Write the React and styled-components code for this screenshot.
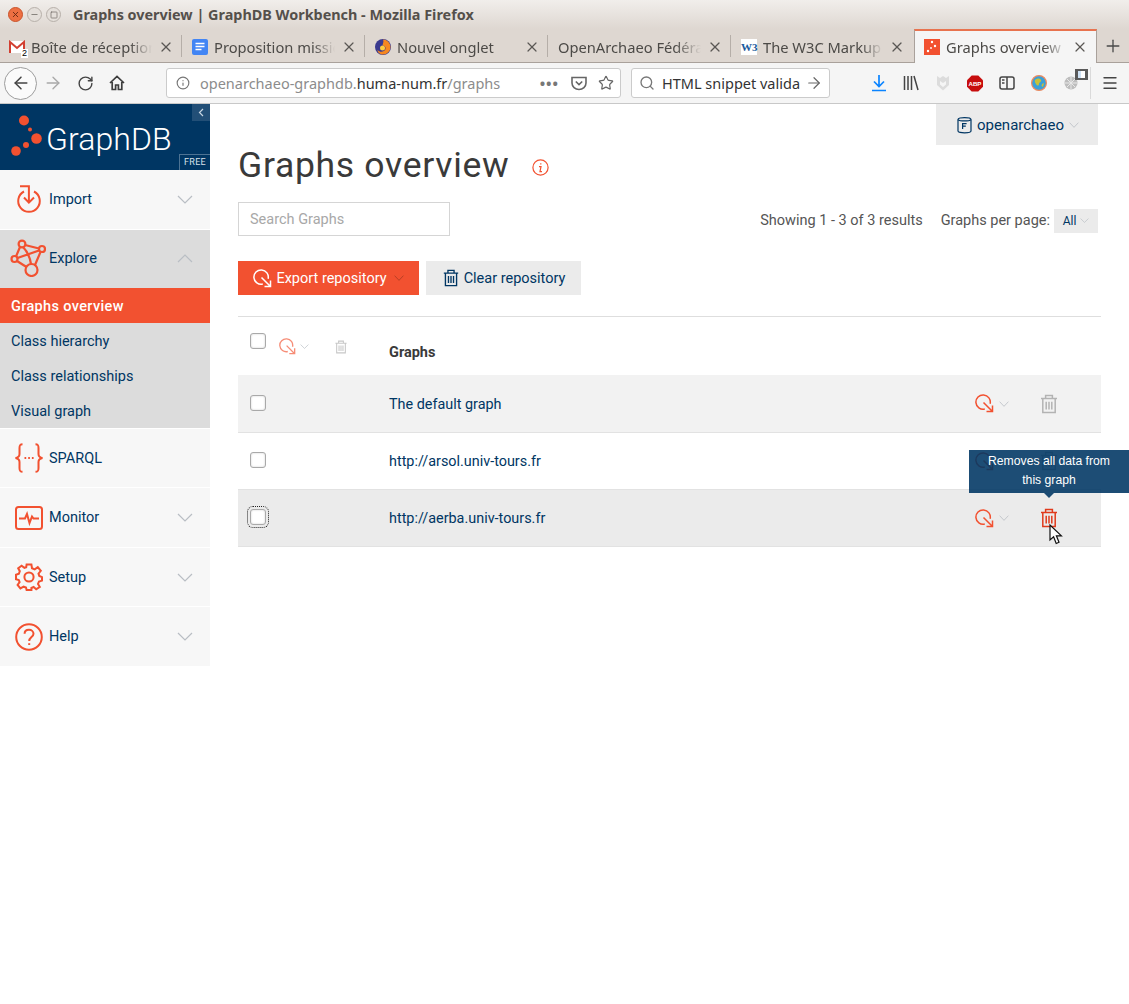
import React from 'react';
import styled, { createGlobalStyle } from 'styled-components';
import { ArrowLeft, ArrowRight, RotateCw, Search, X, Plus, Menu, Info, Minus, Square, Star } from 'lucide-react';

const ORANGE = '#f25130';
const NAVY = '#003663';

const GlobalStyle = createGlobalStyle`
  html, body { margin: 0; padding: 0; background: #fff; }
  * { box-sizing: border-box; }
  body { font-family: "Roboto", "Liberation Sans", sans-serif; }
`;

const ExportIcon = ({ size = 19, color = ORANGE, opacity = 1 }) => (
  <svg width={size} height={size} viewBox="0 0 19 19" fill="none" stroke={color} strokeWidth="1.5" opacity={opacity}>
    <path d="M9.8 15.1A7.2 7.2 0 1 1 15.1 9.8" />
    <path d="M8.5 8.5L17.5 17.5M17.5 11.5V17.5H11.5" />
  </svg>
);

const TrashIcon = ({ size = 20, color = NAVY, opacity = 1 }) => (
  <svg width={size} height={size} viewBox="0 0 20 20" fill="none" stroke={color} strokeWidth="1.5" opacity={opacity}>
    <path d="M2 4.6H18M6.6 4.4V1.6H13.4V4.4M3.8 4.8V18.4H16.2V4.8M7.2 7.8V15.6M10 7.8V15.6M12.8 7.8V15.6" />
  </svg>
);

const Chevron = ({ width = 16, height = 9, up = false, color = '#b9bec4' }) => (
  <svg width={width} height={height} viewBox="0 0 16 9" fill="none" stroke={color} strokeWidth="1.2" preserveAspectRatio="none">
    <path d={up ? 'M1 8L8 1L15 8' : 'M1 1L8 8L15 1'} />
  </svg>
);

const ImportIcon = () => (
  <svg width="26" height="30" viewBox="0 0 26 30" fill="none" stroke={ORANGE} strokeWidth="2">
    <path d="M8 6.5A10.8 10.8 0 1 0 18 6.5" />
    <path d="M4 1.2H12.9V17M8 12.5L12.9 17.6L18 12.5" />
  </svg>
);

const ExploreIcon = () => (
  <svg width="36" height="38" viewBox="0 0 36 38" fill="none" stroke={ORANGE} strokeWidth="2.2">
    <circle cx="12" cy="5" r="3.4" />
    <circle cx="32" cy="10" r="3" />
    <circle cx="21.5" cy="31" r="6" />
    <circle cx="4.5" cy="20" r="3" />
    <path d="M10 8L6 17.5M15 6L29 9.5M7 22L16.5 28M30.5 13L25 26M13 8C18 13 20 19 21 25M7.5 19L29 11.5" />
  </svg>
);

const BracesIcon = () => (
  <svg width="30" height="30" viewBox="0 0 30 30" fill="none" stroke={ORANGE} strokeWidth="2">
    <path d="M8.5 1.2C5.5 1.2 5.5 3 5.5 5V11C5.5 13 4 14.6 1.5 15C4 15.4 5.5 17 5.5 19V25C5.5 27 5.5 28.8 8.5 28.8" />
    <path d="M21.5 1.2C24.5 1.2 24.5 3 24.5 5V11C24.5 13 26 14.6 28.5 15C26 15.4 24.5 17 24.5 19V25C24.5 27 24.5 28.8 21.5 28.8" />
    <path d="M10.5 15H12.2M14.2 15H15.9M17.9 15H19.6" strokeWidth="2.1" />
  </svg>
);

const MonitorIcon = () => (
  <svg width="28" height="24" viewBox="0 0 28 24" fill="none" stroke={ORANGE} strokeWidth="2">
    <rect x="1" y="1" width="26" height="22" rx="2.5" />
    <path d="M4 12.5H10L12 8L14.5 17L17 10.5L18.5 12.5H24" />
  </svg>
);

const GearIcon = () => (
  <svg width="28" height="28" viewBox="0 0 28 28" fill="none" stroke={ORANGE} strokeWidth="2">
    <circle cx="14" cy="14" r="4.6" />
    <path d="M11.6 1.5H16.4L17 5.2L19.7 6.4L22.8 4.2L25.8 7.8L23.5 10.6L24.3 13L27 14.2V17.6L24 18.5L23 21L24.8 24L21.2 26.2L18.6 24L16.4 25V27H11.6L11 24.6L8.6 23.7L5.4 25.4L2.6 22L4.6 19.2L3.8 17L1 16.2V11.8L3.9 10.8L4.8 8.2L3.2 5.2L6.6 2.8L9.4 4.8L11.2 4.2Z" />
  </svg>
);

const HelpIcon = () => (
  <svg width="28" height="28" viewBox="0 0 28 28" fill="none" stroke={ORANGE} strokeWidth="2">
    <circle cx="14" cy="14" r="12.8" />
    <path d="M9.6 10.8C9.6 8.2 11.6 6.8 14 6.8C16.5 6.8 18.5 8.4 18.5 10.8C18.5 14 14.2 14.2 14.2 18" />
    <path d="M14.2 20.2V22" />
  </svg>
);

const RepoIcon = () => (
  <svg width="15" height="18" viewBox="0 0 15 18" fill="none" stroke={NAVY} strokeWidth="1.2">
    <path d="M1 3.4C1 0.9 14 0.9 14 3.4V15C14 17.4 1 17.4 1 15Z" />
    <path d="M1 3.6C3 5.4 12 5.4 14 3.6" />
    <path d="M5.6 13V7.6H9.6M5.6 10.2H8.8" />
  </svg>
);

const GraphLogo = () => (
  <svg width="33" height="44" viewBox="0 0 33 44">
    <g fill={ORANGE}>
      <circle cx="14" cy="5.5" r="5" />
      <circle cx="20" cy="14.5" r="2" />
      <circle cx="26.5" cy="23.5" r="5.3" />
      <circle cx="16" cy="30" r="3" />
      <circle cx="6" cy="36" r="4.8" />
    </g>
  </svg>
);

const GmailIcon = () => (
  <svg width="16" height="14" viewBox="0 0 16 14">
    <rect x="0.5" y="1" width="15" height="12" fill="#fff" />
    <path d="M1 13V2L8 8L15 2V13" fill="none" stroke="#d23f31" strokeWidth="2" />
  </svg>
);

const DocsIcon = () => (
  <svg width="16" height="16" viewBox="0 0 16 16">
    <rect width="16" height="16" rx="2" fill="#4285f4" />
    <path d="M3.5 4.5H12.5M3.5 7.5H12.5M3.5 10.5H9.5" stroke="#fff" strokeWidth="1.5" />
  </svg>
);

const FirefoxIcon = () => (
  <svg width="16" height="16" viewBox="0 0 16 16">
    <circle cx="8" cy="8" r="8" fill="#3b3a8f" />
    <path d="M8 0.5A7.5 7.5 0 0 1 15.5 8A7.5 7.5 0 0 1 8 15.5C4.5 15.5 2.5 13 2.5 11C5 14 9.5 13 10.5 10C11 8 9.5 6.5 7.5 6.5C8 4 9 2.5 8 0.5Z" fill="#f6871f" />
    <circle cx="7.5" cy="9" r="2.5" fill="#ffcb3d" />
  </svg>
);

const FavGraph = () => (
  <svg width="16" height="16" viewBox="0 0 16 16">
    <rect width="16" height="16" fill={ORANGE} />
    <g fill="#fff">
      <circle cx="8" cy="3" r="1.2" />
      <circle cx="11" cy="7" r="1.2" />
      <circle cx="7" cy="9" r="0.9" />
      <circle cx="4" cy="12" r="1.2" />
    </g>
  </svg>
);

const HomeIcon = () => (
  <svg width="16" height="16" viewBox="0 0 16 16" fill="none" stroke="#3d3d3d" strokeWidth="1.7">
    <path d="M1 8L8 1.5L15 8M3.2 7V14.5H6.6V10H9.4V14.5H12.8V7" />
  </svg>
);

const PocketIcon = () => (
  <svg width="16" height="15" viewBox="0 0 16 15" fill="none" stroke="#666" strokeWidth="1.6">
    <path d="M1 1.5H15V7A7 6.5 0 0 1 1 7Z" />
    <path d="M4.8 5.5L8 8.6L11.2 5.5" />
  </svg>
);

const LibraryIcon = () => (
  <svg width="16" height="16" viewBox="0 0 16 16" fill="none" stroke="#444" strokeWidth="1.5">
    <path d="M1.5 1V15M5 1V15M8.5 1V15M11 1L15 15" />
  </svg>
);

const ShieldIcon = () => (
  <svg width="14" height="16" viewBox="0 0 14 16" fill="#dcdcdc">
    <path d="M1 1L4 3L7 1L10 3L13 1V10L7 15.5L1 10ZM4 6V9.5L7 12L10 9.5V6L7 8Z" />
  </svg>
);

const AbpIcon = () => (
  <svg width="17" height="17" viewBox="0 0 17 17">
    <path d="M5 0H12L17 5V12L12 17H5L0 12V5Z" fill="#c70d0d" />
    <text x="8.5" y="11" textAnchor="middle" fontFamily="Liberation Sans" fontSize="6.5" fontWeight="700" fill="#fff">ABP</text>
  </svg>
);

const SidebarIcon = () => (
  <svg width="16" height="14" viewBox="0 0 16 14" fill="none" stroke="#444" strokeWidth="1.5">
    <rect x="1" y="1" width="14" height="12" rx="2" />
    <path d="M8 1V13M3 4H5.5M3 7H5.5" />
  </svg>
);

const GlobeIcon = () => (
  <svg width="16" height="16" viewBox="0 0 16 16">
    <circle cx="8" cy="8" r="7.4" fill="#3aa0d8" stroke="#f08a5d" strokeWidth="1.2" />
    <path d="M4 5C6 3 9 3 10 5C11 7 8 7 8 9C8 11 6 11 5 9C4 8 3.5 6 4 5ZM11 9L13 8L12 12L10.5 11Z" fill="#c7c13a" />
  </svg>
);

const ExtIcon = () => (
  <svg width="14" height="14" viewBox="0 0 14 14">
    <circle cx="7" cy="7" r="6.5" fill="#bdbdbd" />
    <path d="M7 1V13M1 7H13M3 3L11 11M11 3L3 11" stroke="#e8e8e8" strokeWidth="1" />
  </svg>
);

const CursorIcon = () => (
  <svg width="14" height="21" viewBox="0 0 14 21">
    <path d="M1 1V16L4.6 12.8L7.2 19.5L10 18.3L7.4 11.8H12.4Z" fill="#fff" stroke="#111" strokeWidth="1.2" />
  </svg>
);

const Page = styled.div`
  width: 1129px;
  min-height: 1004px;
  background: #fff;
`;

const Chrome = styled.header`
  height: 104px;
  font-family: "Noto Sans", "Open Sans", sans-serif;
  border-bottom: 1px solid #c8c8c8;
`;

const TitleBar = styled.div`
  height: 29px;
  display: flex;
  align-items: center;
  padding-left: 8px;
  background: linear-gradient(#f1eeeb, #ded7d1);
`;

const WindowButton = styled.span`
  width: 15px;
  height: 15px;
  margin-right: 4px;
  border-radius: 50%;
  display: flex;
  align-items: center;
  justify-content: center;
  color: ${p => (p.$close ? '#6d2a12' : '#6a655f')};
  border: 1px solid ${p => (p.$close ? '#c9532b' : '#b7b0aa')};
  background: ${p => (p.$close ? '#ee6f42' : '#e4dfda')};
`;

const WindowTitle = styled.div`
  margin-left: 8px;
  font-size: 14.4px;
  font-weight: 700;
  color: #55504b;
  white-space: nowrap;
`;

const TabStrip = styled.div`
  height: 34px;
  display: flex;
  background: #ded7d1;
  border-bottom: 1px solid #a9a19b;
`;

const Tab = styled.div`
  position: relative;
  width: ${p => p.$width || 183}px;
  height: ${p => (p.$active ? 34 : 33)}px;
  display: flex;
  align-items: center;
  padding: 0 9px;
  gap: 6px;
  color: #4c4a47;
  font-size: 14.7px;
  background: ${p => (p.$active ? '#f5f5f5' : 'transparent')};
  border-top: ${p => (p.$active ? `2px solid #e8734f` : '2px solid transparent')};
  border-right: 1px solid ${p => (p.$active ? '#a9a19b' : 'transparent')};
  border-left: ${p => (p.$active ? '1px solid #a9a19b' : 'none')};
  &::after {
    content: ${p => (p.$sep ? '""' : 'none')};
    position: absolute;
    right: 0;
    top: 4px;
    bottom: 5px;
    width: 1px;
    background: #b5aea8;
  }
`;

const TabIcon = styled.span`
  position: relative;
  flex: none;
  width: 16px;
  height: 16px;
  display: flex;
  align-items: center;
  justify-content: center;
`;

const GmailBadge = styled.span`
  position: absolute;
  right: -3px;
  bottom: -3px;
  background: #fff;
  color: #000;
  font: 9px/9px "Liberation Sans", sans-serif;
  padding: 0 1px;
`;

const W3Mark = styled.span`
  width: 16px;
  height: 16px;
  background: #fff;
  color: #1a5a9c;
  font: 700 11px/16px "Liberation Serif", serif;
  text-align: center;
`;

const TabLabel = styled.span`
  flex: 1;
  min-width: 0;
  white-space: nowrap;
  overflow: hidden;
  -webkit-mask-image: linear-gradient(to right, #000 82%, transparent);
  mask-image: linear-gradient(to right, #000 82%, transparent);
`;

const TabClose = styled.span`
  flex: none;
  display: flex;
  margin-right: -1px;
  color: #5a5754;
`;

const NewTab = styled.div`
  flex: 1;
  display: flex;
  align-items: center;
  justify-content: center;
  color: #4a4a4a;
`;

const Toolbar = styled.div`
  height: 40px;
  display: flex;
  align-items: center;
  padding-left: 4px;
  background: #f5f5f5;
`;

const BackButton = styled.span`
  flex: none;
  width: 33px;
  height: 33px;
  border-radius: 50%;
  border: 1px solid #9d9d9d;
  background: #fbfbfb;
  display: flex;
  align-items: center;
  justify-content: center;
  color: #444;
`;

const NavButton = styled.span`
  flex: none;
  width: ${p => p.$width || 32}px;
  display: flex;
  align-items: center;
  justify-content: center;
  color: ${p => p.$color || '#444'};
`;

const UrlBar = styled.div`
  width: ${p => p.$width}px;
  margin-left: ${p => p.$left}px;
  height: 30px;
  flex: none;
  display: flex;
  align-items: center;
  background: #fff;
  border: 1px solid #cbcbcb;
  border-radius: 3px;
  font-size: 14.5px;
  color: #333;
  white-space: nowrap;
  overflow: hidden;
`;

const UrlInfo = styled.span`
  display: flex;
  margin: 0 ${p => p.$right || 10}px 0 ${p => p.$left || 9}px;
  color: #777;
`;

const Dim = styled.span`
  color: #8c8c8c;
`;

const UrlText = styled.span`
  flex: 1;
`;

const PageDots = styled.span`
  color: #777;
  font-weight: 700;
  letter-spacing: 1px;
  margin-right: 12px;
`;

const UrlAction = styled.span`
  display: flex;
  margin-right: ${p => p.$right || 6}px;
  color: #666;
`;

const SearchText = styled.span`
  width: 138px;
  overflow: hidden;
  margin-right: 5px;
`;

const ToolIcons = styled.div`
  flex: none;
  margin-left: 41px;
  display: flex;
  align-items: center;
  gap: 16px;
`;

const ToolSlot = styled.span`
  position: relative;
  width: 16px;
  height: 20px;
  display: flex;
  align-items: center;
  justify-content: center;
  color: #0a84ff;
`;

const ReaderBadge = styled.span`
  position: absolute;
  top: -4px;
  right: -9px;
  width: 13px;
  height: 11px;
  background: #5a5a5a;
  &::after {
    content: "";
    position: absolute;
    left: 3px;
    right: 3px;
    top: 2px;
    bottom: 2px;
    background: #fff;
    border-left: 3px solid #cfe2f5;
  }
`;

const ToolDivider = styled.span`
  flex: none;
  width: 1px;
  height: 32px;
  margin-left: 11px;
  background: #dadada;
`;

const Body = styled.div`
  display: flex;
  align-items: flex-start;
`;

const Sidebar = styled.nav`
  flex: none;
  width: 210px;
`;

const Brand = styled.div`
  position: relative;
  height: 66px;
  background: ${NAVY};
  display: flex;
  align-items: center;
  padding-left: 10px;
  color: #fff;
`;

const BrandName = styled.span`
  margin-left: 3px;
  padding-top: 3px;
  font: 300 32px/44px "Roboto", "Lato", sans-serif;
  letter-spacing: 0.1px;
`;

const CollapseButton = styled.span`
  position: absolute;
  top: 0;
  right: 0;
  width: 18px;
  height: 17px;
  background: #224f77;
  color: #c8d6e2;
  display: flex;
  align-items: center;
  justify-content: center;
`;

const FreeBadge = styled.span`
  position: absolute;
  right: 0;
  bottom: 0;
  width: 31px;
  height: 16px;
  border: 1px solid #4d7393;
  border-bottom: none;
  border-right: none;
  font: 9px/15px "Roboto", sans-serif;
  letter-spacing: 0.3px;
  text-align: center;
  color: #d8e2ea;
`;

const NavItem = styled.div`
  height: ${p => p.$height || 59}px;
  display: flex;
  align-items: center;
  padding-bottom: ${p => (p.$open ? 2 : 0)}px;
  background: ${p => (p.$open ? '#dcdcdc' : '#f7f7f7')};
  border-bottom: ${p => (p.$plain ? 'none' : '1px solid #fff')};
  color: ${NAVY};
  font-size: 14.5px;
`;

const NavIcon = styled.span`
  flex: none;
  width: 49px;
  padding-left: ${p => (p.$wide ? 6 : 9)}px;
  display: flex;
  align-items: center;
  justify-content: center;
`;

const NavLabel = styled.span`
  flex: 1;
`;

const NavChevron = styled.span`
  display: flex;
  margin-right: 17px;
`;

const SubMenu = styled.div`
  background: #dcdcdc;
  border-bottom: 1px solid #fff;
`;

const SubItem = styled.div`
  height: 35px;
  padding: 1px 0 0 11px;
  display: flex;
  align-items: center;
  font-size: 14.5px;
  color: ${p => (p.$active ? '#fff' : NAVY)};
  font-weight: ${p => (p.$active ? 500 : 400)};
  letter-spacing: ${p => (p.$active ? '0.35px' : '0')};
  background: ${p => (p.$active ? ORANGE : 'transparent')};
`;

const Main = styled.main`
  flex: 1;
  min-width: 0;
  padding: 0 28px;
`;

const RepoRow = styled.div`
  display: flex;
  justify-content: flex-end;
  padding-right: 3px;
`;

const RepoButton = styled.div`
  width: 162px;
  height: 41px;
  padding: 1px 0 0 2px;
  display: flex;
  align-items: center;
  justify-content: center;
  gap: 5px;
  background: #ebebeb;
  color: ${NAVY};
  font-size: 15px;
`;

const TitleRow = styled.div`
  height: 40px;
  display: flex;
  align-items: center;
  gap: 23px;
`;

const Title = styled.h1`
  margin: 0;
  font: 400 35.5px/40px "Roboto", sans-serif;
  letter-spacing: 0.7px;
  color: #3a3a3a;
`;

const InfoMark = styled.svg`
  margin-top: 5px;
`;

const FilterRow = styled.div`
  margin-top: 17px;
  display: flex;
  align-items: center;
  justify-content: space-between;
  padding-right: 3px;
`;

const SearchInput = styled.input`
  width: 212px;
  height: 34px;
  padding: 0 11px;
  border: 1px solid #d5d5d5;
  font: 14.5px "Roboto", sans-serif;
  outline: none;
  &::placeholder { color: #a8a8a8; opacity: 1; }
`;

const Results = styled.div`
  display: flex;
  align-items: center;
  padding-top: 3px;
  font-size: 14.5px;
  color: #555;
`;

const PerPage = styled.span`
  margin-left: 18px;
  margin-right: 4px;
`;

const PageSelect = styled.span`
  width: 44px;
  height: 24px;
  display: flex;
  align-items: center;
  justify-content: center;
  gap: 4px;
  background: #ebebeb;
  color: ${NAVY};
  font-size: 12px;
`;

const ActionRow = styled.div`
  margin-top: 25px;
  display: flex;
  gap: 7px;
`;

const ActionButton = styled.button`
  height: 34px;
  padding: 0;
  width: ${p => p.$width}px;
  display: flex;
  align-items: center;
  justify-content: center;
  gap: 4px;
  border: none;
  background: ${p => (p.$primary ? ORANGE : '#ebebeb')};
  color: ${p => (p.$primary ? '#fff' : NAVY)};
  font: 14.5px "Roboto", sans-serif;
`;

const ButtonChevron = styled.span`
  display: flex;
  margin-left: 3px;
`;

const Table = styled.section`
  margin-top: 21px;
  border-top: 1px solid #dedede;
`;

const Row = styled.div`
  height: ${p => p.$height}px;
  display: grid;
  grid-template-columns: 151px 1fr 126px;
  align-items: center;
  background: ${p => p.$bg || '#fff'};
  border-bottom: 1px solid #e2e2e2;
`;

const HeaderRow = styled(Row)`
  align-items: start;
  border-bottom: none;
`;

const CheckCell = styled.div`
  padding: 0 0 2px 12px;
  display: flex;
  align-items: center;
`;

const HeaderTools = styled.div`
  display: flex;
  align-items: flex-start;
  padding: 16px 0 0 12px;
`;

const Check = styled.span`
  flex: none;
  width: 16px;
  height: 16px;
  border: 1px solid #a9a9a9;
  border-radius: 3px;
  background: #fff;
  box-shadow: inset 0 0 2px #c8c8c8;
  outline: ${p => (p.$focus ? '1px dotted #222' : 'none')};
  outline-offset: 2px;
`;

const HeaderIcons = styled.span`
  margin-left: 13px;
  display: flex;
  align-items: center;
  padding-top: 5px;
`;

const SmallChevron = styled.span`
  display: flex;
  margin-left: ${p => p.$left || 4}px;
`;

const HeaderTrash = styled.span`
  display: flex;
  margin-left: 25px;
`;

const HeaderTitle = styled.div`
  padding-top: 27px;
  font-size: 14.5px;
  font-weight: 700;
  color: #3a3a3a;
`;

const GraphName = styled.div`
  padding-top: 1px;
  font-size: 14.4px;
  color: ${NAVY};
`;

const RowActions = styled.div`
  display: flex;
  align-items: center;
`;

const TrashCell = styled.span`
  position: relative;
  display: flex;
  margin-left: 30px;
`;

const Tooltip = styled.div`
  position: absolute;
  left: 50%;
  bottom: 35px;
  width: 160px;
  margin-left: -80px;
  padding: 2px 12px 3px;
  background: rgba(0, 54, 99, 0.886);
  color: #fff;
  font: 12.2px/19px "Liberation Sans", sans-serif;
  text-align: center;
  &::after {
    content: "";
    position: absolute;
    left: 50%;
    bottom: -5px;
    margin-left: -5px;
    border: 5px solid transparent;
    border-bottom: none;
    border-top-color: rgba(0, 54, 99, 0.886);
  }
`;

const Pointer = styled.span`
  position: absolute;
  left: 10px;
  top: 16px;
  display: flex;
`;

const navGroups = [
  { label: 'SPARQL', icon: <BracesIcon />, height: 59 },
  { label: 'Monitor', icon: <MonitorIcon />, chevron: true, height: 60 },
  { label: 'Setup', icon: <GearIcon />, chevron: true, height: 59 },
];

const subItems = ['Graphs overview', 'Class hierarchy', 'Class relationships', 'Visual graph'];

const tabs = [
  { label: 'Boîte de réception', icon: <><GmailIcon /><GmailBadge>2</GmailBadge></>, sep: true },
  { label: 'Proposition mission', icon: <DocsIcon />, sep: true },
  { label: 'Nouvel onglet', icon: <FirefoxIcon />, sep: true },
  { label: 'OpenArchaeo Fédération', sep: true },
  { label: 'The W3C Markup Validator', icon: <W3Mark>W3</W3Mark>, width: 182 },
  { label: 'Graphs overview | GraphDB', icon: <FavGraph />, active: true },
];

const RowTools = ({ trashColor, trashOpacity, children }) => (
  <RowActions>
    <ExportIcon />
    <SmallChevron $left={5}><Chevron width={10} height={6} /></SmallChevron>
    <TrashCell>
      <TrashIcon color={trashColor} opacity={trashOpacity} />
      {children}
    </TrashCell>
  </RowActions>
);

export default function App() {
  return (
    <Page>
      <GlobalStyle />
      <Chrome>
        <TitleBar>
          <WindowButton $close><X size={9} strokeWidth={2.5} /></WindowButton>
          <WindowButton><Minus size={9} /></WindowButton>
          <WindowButton><Square size={8} /></WindowButton>
          <WindowTitle>Graphs overview | GraphDB Workbench - Mozilla Firefox</WindowTitle>
        </TitleBar>
        <TabStrip>
          {tabs.map(tab => (
            <Tab key={tab.label} $active={tab.active} $sep={tab.sep} $width={tab.width}>
              {tab.icon && <TabIcon>{tab.icon}</TabIcon>}
              <TabLabel>{tab.label}</TabLabel>
              <TabClose><X size={16} strokeWidth={1.8} /></TabClose>
            </Tab>
          ))}
          <NewTab><Plus size={20} strokeWidth={1.6} /></NewTab>
        </TabStrip>
        <Toolbar>
          <BackButton><ArrowLeft size={20} strokeWidth={1.8} /></BackButton>
          <NavButton $color="#a8a8a8"><ArrowRight size={20} strokeWidth={1.6} /></NavButton>
          <NavButton><RotateCw size={17} strokeWidth={2} /></NavButton>
          <NavButton><HomeIcon /></NavButton>
          <UrlBar $width={455} $left={33}>
            <UrlInfo><Info size={14} /></UrlInfo>
            <UrlText><Dim>openarchaeo-graphdb.</Dim>huma-num.fr<Dim>/graphs</Dim></UrlText>
            <PageDots>•••</PageDots>
            <UrlAction $right={11}><PocketIcon /></UrlAction>
            <UrlAction><Star size={16} strokeWidth={1.8} /></UrlAction>
          </UrlBar>
          <UrlBar $width={199} $left={10}>
            <UrlInfo $left={7} $right={7}><Search size={16} /></UrlInfo>
            <SearchText>HTML snippet validation</SearchText>
            <UrlAction $right={0}><ArrowRight size={18} strokeWidth={1.6} /></UrlAction>
          </UrlBar>
          <ToolIcons>
            <ToolSlot>
              <svg width="16" height="18" viewBox="0 0 16 18" fill="none" stroke="currentColor" strokeWidth="1.7">
                <path d="M8 1V12M3 7.5L8 12.5L13 7.5M1 16.5H15" />
              </svg>
            </ToolSlot>
            <ToolSlot><LibraryIcon /></ToolSlot>
            <ToolSlot><ShieldIcon /></ToolSlot>
            <ToolSlot><AbpIcon /></ToolSlot>
            <ToolSlot><SidebarIcon /></ToolSlot>
            <ToolSlot><GlobeIcon /></ToolSlot>
            <ToolSlot><ExtIcon /><ReaderBadge /></ToolSlot>
          </ToolIcons>
          <ToolDivider />
          <NavButton $width={38}><Menu size={18} strokeWidth={1.8} /></NavButton>
        </Toolbar>
      </Chrome>
      <Body>
        <Sidebar>
          <Brand>
            <GraphLogo />
            <BrandName>GraphDB</BrandName>
            <CollapseButton>
              <svg width="6" height="9" viewBox="0 0 6 9" fill="none" stroke="currentColor" strokeWidth="1.2"><path d="M5 1L1.5 4.5L5 8" /></svg>
            </CollapseButton>
            <FreeBadge>FREE</FreeBadge>
          </Brand>
          <NavItem $height={60}>
            <NavIcon><ImportIcon /></NavIcon>
            <NavLabel>Import</NavLabel>
            <NavChevron><Chevron /></NavChevron>
          </NavItem>
          <NavItem $open $plain $height={58}>
            <NavIcon $wide><ExploreIcon /></NavIcon>
            <NavLabel>Explore</NavLabel>
            <NavChevron><Chevron up /></NavChevron>
          </NavItem>
          <SubMenu>
            {subItems.map((item, i) => <SubItem key={item} $active={i === 0}>{item}</SubItem>)}
          </SubMenu>
          {navGroups.map(item => (
            <NavItem key={item.label} $height={item.height}>
              <NavIcon>{item.icon}</NavIcon>
              <NavLabel>{item.label}</NavLabel>
              {item.chevron && <NavChevron><Chevron /></NavChevron>}
            </NavItem>
          ))}
          <NavItem $plain>
            <NavIcon><HelpIcon /></NavIcon>
            <NavLabel>Help</NavLabel>
            <NavChevron><Chevron /></NavChevron>
          </NavItem>
        </Sidebar>
        <Main>
          <RepoRow>
            <RepoButton>
              <RepoIcon />
              openarchaeo
              <Chevron width={10} height={6} />
            </RepoButton>
          </RepoRow>
          <TitleRow>
            <Title>Graphs overview</Title>
            <InfoMark width="17" height="17" viewBox="0 0 17 17" fill="none" stroke={ORANGE} strokeWidth="1.2">
              <circle cx="8.5" cy="8.5" r="7.6" />
              <path d="M8.8 4.2V5.4M7 7.6H9L8 12.6H10" />
            </InfoMark>
          </TitleRow>
          <FilterRow>
            <SearchInput placeholder="Search Graphs" />
            <Results>
              Showing 1 - 3 of 3 results
              <PerPage>Graphs per page:</PerPage>
              <PageSelect>All <Chevron width={9} height={5} /></PageSelect>
            </Results>
          </FilterRow>
          <ActionRow>
            <ActionButton $primary $width={181}>
              <ExportIcon color="#fff" />
              Export repository
              <ButtonChevron><Chevron width={10} height={6} color="#a83a22" /></ButtonChevron>
            </ActionButton>
            <ActionButton $width={155}>
              <TrashIcon size={18} />
              Clear repository
            </ActionButton>
          </ActionRow>
          <Table>
            <HeaderRow $height={58}>
              <HeaderTools>
                <Check />
                <HeaderIcons>
                  <ExportIcon size={17} opacity={0.65} />
                  <SmallChevron><Chevron width={9} height={5} /></SmallChevron>
                  <HeaderTrash><TrashIcon size={14} color="#9a9a9a" opacity={0.55} /></HeaderTrash>
                </HeaderIcons>
              </HeaderTools>
              <HeaderTitle>Graphs</HeaderTitle>
            </HeaderRow>
            <Row $height={58} $bg="#f2f2f2">
              <CheckCell><Check /></CheckCell>
              <GraphName>The default graph</GraphName>
              <RowTools trashColor="#8a8a8a" trashOpacity={0.6} />
            </Row>
            <Row $height={57}>
              <CheckCell><Check /></CheckCell>
              <GraphName>http://arsol.univ-tours.fr</GraphName>
              <RowTools trashColor="#8a8a8a" trashOpacity={0.6} />
            </Row>
            <Row $height={57} $bg="#ebebeb">
              <CheckCell><Check $focus /></CheckCell>
              <GraphName>http://aerba.univ-tours.fr</GraphName>
              <RowTools trashColor="#e03a1c">
                <Tooltip>Removes all data from this graph</Tooltip>
                <Pointer><CursorIcon /></Pointer>
              </RowTools>
            </Row>
          </Table>
        </Main>
      </Body>
    </Page>
  );
}
